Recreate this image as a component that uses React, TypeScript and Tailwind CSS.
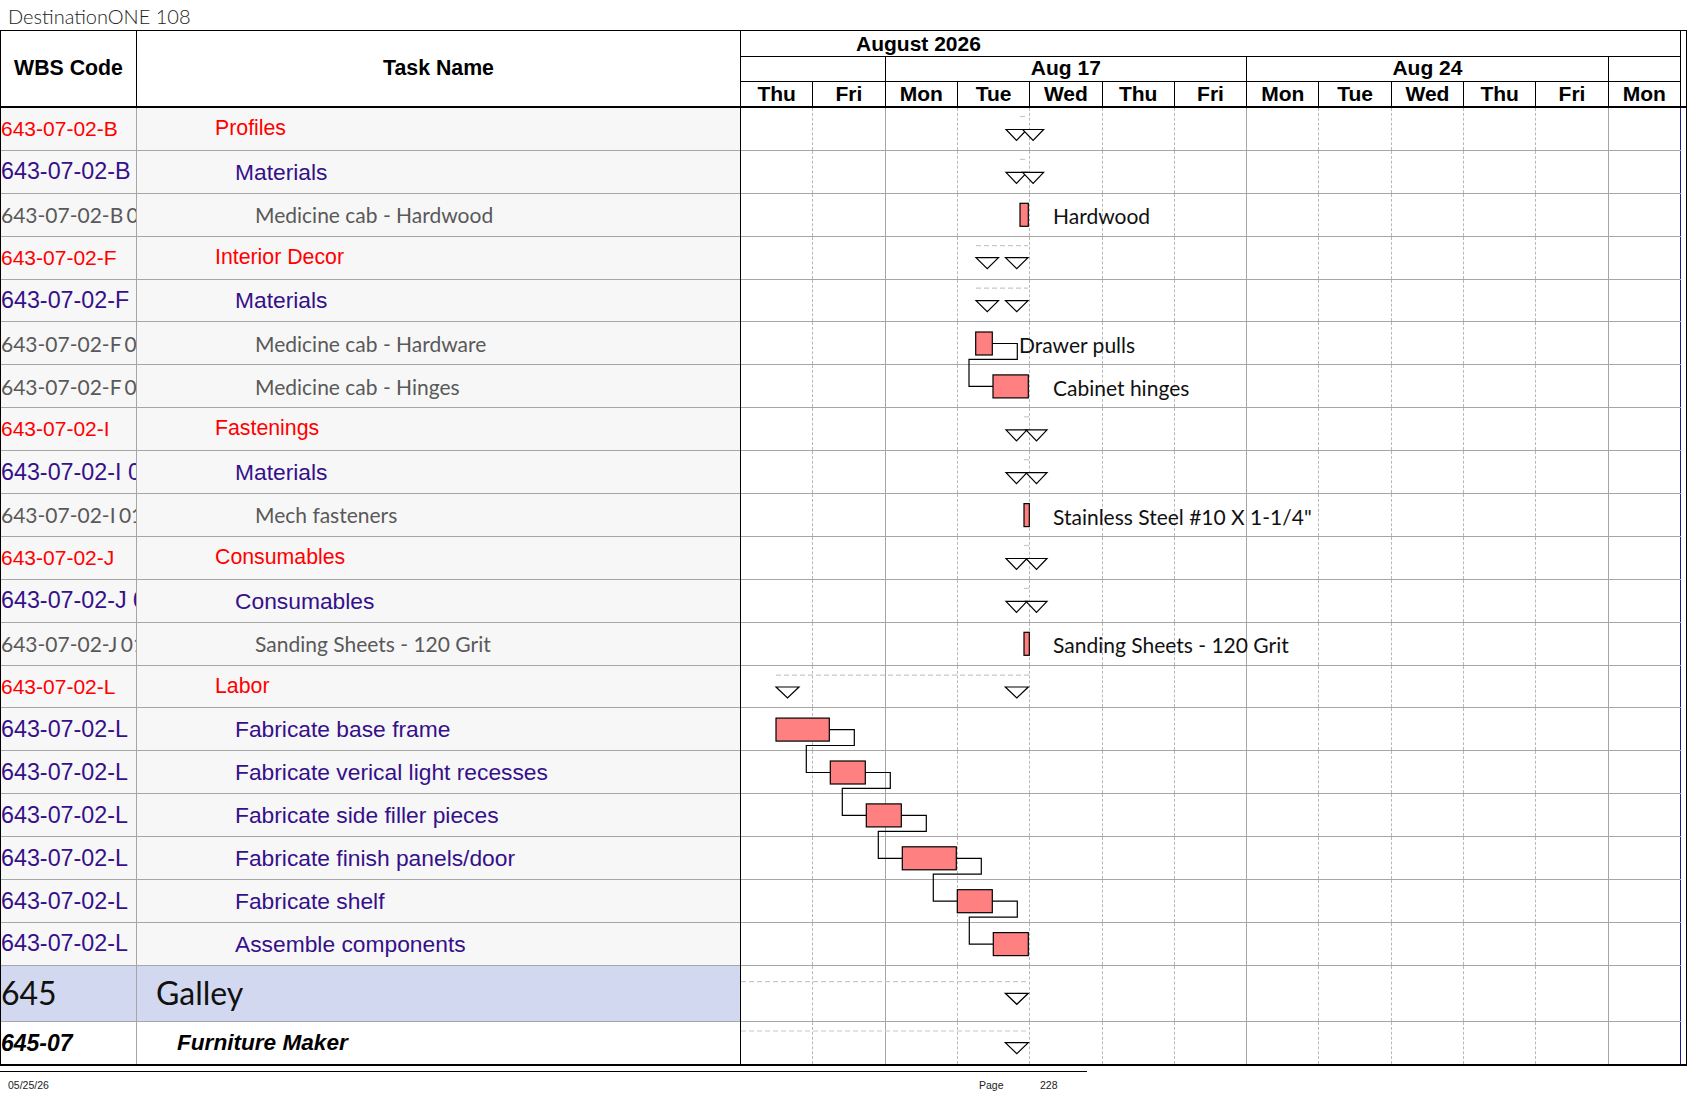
import React from "react";

type Kind = "sum" | "sub" | "task";
type Row = { wbs: string; name: string; kind: Kind };

const rows: Row[] = [
  { wbs: "643-07-02-B", name: "Profiles", kind: "sum" },
  { wbs: "643-07-02-B", name: "Materials", kind: "sub" },
  { wbs: "643-07-02-B 01", name: "Medicine cab - Hardwood", kind: "task" },
  { wbs: "643-07-02-F", name: "Interior Decor", kind: "sum" },
  { wbs: "643-07-02-F", name: "Materials", kind: "sub" },
  { wbs: "643-07-02-F 01", name: "Medicine cab - Hardware", kind: "task" },
  { wbs: "643-07-02-F 02", name: "Medicine cab - Hinges", kind: "task" },
  { wbs: "643-07-02-I", name: "Fastenings", kind: "sum" },
  { wbs: "643-07-02-I 01", name: "Materials", kind: "sub" },
  { wbs: "643-07-02-I 01 01", name: "Mech fasteners", kind: "task" },
  { wbs: "643-07-02-J", name: "Consumables", kind: "sum" },
  { wbs: "643-07-02-J 01", name: "Consumables", kind: "sub" },
  { wbs: "643-07-02-J 01 01", name: "Sanding Sheets - 120 Grit", kind: "task" },
  { wbs: "643-07-02-L", name: "Labor", kind: "sum" },
  { wbs: "643-07-02-L", name: "Fabricate base frame", kind: "sub" },
  { wbs: "643-07-02-L", name: "Fabricate verical light recesses", kind: "sub" },
  { wbs: "643-07-02-L", name: "Fabricate side filler pieces", kind: "sub" },
  { wbs: "643-07-02-L", name: "Fabricate finish panels/door", kind: "sub" },
  { wbs: "643-07-02-L", name: "Fabricate shelf", kind: "sub" },
  { wbs: "643-07-02-L", name: "Assemble components", kind: "sub" },
];

const wbsStyle: Record<Kind, string> = {
  sum: "font-['Liberation_Sans',Arial,sans-serif] text-[21px] text-[#ff0000]",
  sub: "font-['Liberation_Sans',Arial,sans-serif] text-[23.3px] text-[#35108a]",
  task: "font-['Lato',sans-serif] text-[21px] text-[#595959] [word-spacing:-2px]",
};

const nameStyle: Record<Kind, string> = {
  sum: "pl-[78px] font-['Liberation_Sans',Arial,sans-serif] text-[21.3px] text-[#ff0000]",
  sub: "pl-[98px] font-['Liberation_Sans',Arial,sans-serif] text-[22.8px] text-[#35108a]",
  task: "pl-[118px] font-['Lato',sans-serif] text-[21px] text-[#595959]",
};

const days = ["Thu", "Fri", "Mon", "Tue", "Wed", "Thu", "Fri", "Mon", "Tue", "Wed", "Thu", "Fri", "Mon"];

// page coordinates -> chart body coordinates
const X = (x: number) => x - 741;
const T = (i: number) => 42.9 * i;

const bars: [number, number, number][] = [
  [2, 1020, 1028.3],
  [5, 975.7, 992.3],
  [6, 993, 1028.3],
  [9, 1024, 1029.3],
  [12, 1024, 1029.3],
  [14, 776, 829.3],
  [15, 830.3, 865.3],
  [16, 866.3, 901.3],
  [17, 902.3, 956.3],
  [18, 957.3, 992.3],
  [19, 993.3, 1028.3],
];

const links: [number, number][] = [
  [5, 6],
  [14, 15],
  [15, 16],
  [16, 17],
  [17, 18],
  [18, 19],
];

const labels: [number, string, number][] = [
  [2, "Hardwood", 1053],
  [5, "Drawer pulls", 1019],
  [6, "Cabinet hinges", 1053],
  [9, 'Stainless Steel #10 X 1-1/4"', 1053],
  [12, "Sanding Sheets - 120 Grit", 1053],
];

type Tri = [number, number, number]; // top y, left x, width

const pair = (i: number, dy: number, a: number, b: number, w: number): Tri[] => [
  [T(i) + dy, a, w],
  [T(i) + dy, b, w],
];

const tris: Tri[] = [
  ...pair(0, 21.5, 1006, 1022.6, 21),
  ...pair(1, 21.5, 1006, 1022.6, 21),
  ...pair(3, 21, 976, 1005.5, 22.5),
  ...pair(4, 21, 976, 1005.5, 22.5),
  ...pair(7, 21.5, 1006, 1026, 21),
  ...pair(8, 21.5, 1006, 1026, 21),
  ...pair(10, 21.5, 1006, 1026, 21),
  ...pair(11, 21.5, 1006, 1026, 21),
  ...pair(13, 21.3, 776, 1005.3, 23),
  [885.3, 1005.3, 23],
  [934.7, 1005.3, 23],
];

// [y, x1, x2]
const dashes: [number, number, number][] = [
  [T(0) + 8.5, 1020, 1027],
  [T(1) + 8.5, 1020, 1027],
  [T(3) + 9, 976, 1028],
  [T(4) + 8.5, 976, 1028],
  [T(7) + 8.5, 1024, 1029],
  [T(8) + 8.5, 1024, 1029],
  [T(10) + 8.5, 1024, 1029],
  [T(11) + 8.5, 1024, 1029],
  [T(13) + 9.5, 776, 1029],
  [873.7, 741, 1029],
  [923, 741, 1029],
];

function GridCells() {
  return (
    <>
      {days.map((d, i) =>
        i === 12 ? (
          <div key={i} className="border-r border-[#1c1c8c]" />
        ) : i === 1 || i === 6 || i === 11 ? (
          <div key={i} className="border-r border-[#a6a6a6]" />
        ) : (
          <div key={i} className="border-r border-dashed border-[#b8b8b8]" />
        )
      )}
    </>
  );
}

function GanttDrawing() {
  return (
    <svg className="pointer-events-none absolute left-0 top-0" width={940} height={957} viewBox="0 0 940 957">
      {dashes.map(([y, a, b], i) => (
        <line key={i} x1={X(a)} x2={X(b)} y1={y} y2={y} stroke="#c8c8c8" strokeWidth={1.2} strokeDasharray="5 3" />
      ))}
      {links.map(([a, b]) => {
        const from = bars.find((r) => r[0] === a)!;
        const to = bars.find((r) => r[0] === b)!;
        const xr = X(from[2]);
        const xl = X(to[1]);
        const ca = T(a) + 21;
        const cb = T(b) + 21;
        const mid = T(b) - 6;
        return (
          <path
            key={a}
            d={`M${xr} ${ca} H${xr + 25} V${mid} H${xl - 24} V${cb} H${xl}`}
            fill="none"
            stroke="#000"
            strokeWidth={1.2}
          />
        );
      })}
      {bars.map(([i, a, b]) => (
        <rect key={i} x={X(a)} y={T(i) + 9.5} width={b - a} height={23} fill="#ff8080" stroke="#000" strokeWidth={1.2} />
      ))}
      {tris.map(([y, x, w], i) => (
        <polygon
          key={i}
          points={`${X(x)},${y} ${X(x) + w},${y} ${X(x) + w / 2},${y + 11}`}
          fill="#fff"
          stroke="#000"
          strokeWidth={1.2}
        />
      ))}
      {labels.map(([i, text, x]) => (
        <text
          key={i}
          x={X(x)}
          y={T(i) + 22}
          dominantBaseline="central"
          fontFamily="Lato, sans-serif"
          fontSize={21}
          fill="#111"
        >
          {text}
        </text>
      ))}
    </svg>
  );
}

export default function App() {
  return (
    <div className="h-[1097px] w-[1687px] overflow-hidden bg-white text-black">
      <div className="flex h-[30px] items-center pl-[8px] pt-[2px] font-['Lato',sans-serif] text-[20px] font-light text-[#222]">
        DestinationONE 108
      </div>

      <div className="flex border border-b-2 border-black">
        {/* table columns */}
        <div className="w-[740px] border-r border-black">
          <div className="flex h-[77px] border-b-2 border-black font-['Liberation_Sans',Arial,sans-serif] text-[21.3px] font-bold">
            <div className="flex w-[136px] items-center justify-center border-r border-black">WBS Code</div>
            <div className="flex flex-1 items-center justify-center">Task Name</div>
          </div>
          {rows.map((r, i) => (
            <div key={i} className="flex h-[42.9px] border-b border-[#a6a6a6] bg-[#f7f7f7]">
              <div className={`flex w-[136px] items-center overflow-hidden whitespace-nowrap border-r border-[#a6a6a6] ${wbsStyle[r.kind]}`}>
                {r.wbs}
              </div>
              <div className={`flex flex-1 items-center whitespace-nowrap ${nameStyle[r.kind]}`}>{r.name}</div>
            </div>
          ))}
          <div className="flex h-[55.7px] border-b border-[#a6a6a6] bg-[#d2d8ef] font-['Lato',sans-serif] text-[32px] text-[#111]">
            <div className="flex w-[136px] items-center border-r border-[#a6a6a6]">645</div>
            <div className="flex flex-1 items-center pl-[19px]">Galley</div>
          </div>
          <div className="flex h-[42.6px] bg-white font-['Liberation_Sans',Arial,sans-serif] font-bold italic">
            <div className="flex w-[136px] items-center border-r border-[#a6a6a6] text-[23px]">645-07</div>
            <div className="flex flex-1 items-center pl-[40px] text-[22.6px]">Furniture Maker</div>
          </div>
        </div>

        {/* timescale */}
        <div className="w-[940px]">
          <div className="h-[77px] border-b-2 border-black font-['Liberation_Sans',Arial,sans-serif] text-[21px] font-bold leading-none">
            <div className="flex h-[26px] items-center border-b border-r border-black pb-[1px] pl-[115px]">August 2026</div>
            <div className="grid h-[25px] grid-cols-[repeat(13,minmax(0,1fr))] border-b border-black">
              <div className="col-span-2 border-r border-black" />
              <div className="col-span-5 flex items-center justify-center border-r border-black pb-[3px]">Aug 17</div>
              <div className="col-span-5 flex items-center justify-center border-r border-black pb-[3px]">Aug 24</div>
              <div className="border-r border-black" />
            </div>
            <div className="grid h-[24px] grid-cols-[repeat(13,minmax(0,1fr))]">
              {days.map((d, i) => (
                <div key={i} className="flex items-center justify-center border-r border-black pb-[2px]">
                  {d}
                </div>
              ))}
            </div>
          </div>
          <div className="relative">
            {rows.map((_, i) => (
              <div key={i} className="grid h-[42.9px] grid-cols-[repeat(13,minmax(0,1fr))] border-b border-[#a6a6a6]">
                <GridCells />
              </div>
            ))}
            <div className="grid h-[55.7px] grid-cols-[repeat(13,minmax(0,1fr))] border-b border-[#a6a6a6]">
              <GridCells />
            </div>
            <div className="grid h-[42.6px] grid-cols-[repeat(13,minmax(0,1fr))]">
              <GridCells />
            </div>
            <GanttDrawing />
          </div>
        </div>

        <div className="w-[5px]">
          <div className="h-[77px] border-b-2 border-black" />
        </div>
      </div>

      <div className="mt-[5px] w-[1087px] border-t border-black font-['Liberation_Sans',Arial,sans-serif] text-[10.5px] text-[#222]">
        <div className="flex pl-[8px] pt-[6px]">
          <span className="w-[971px]">05/25/26</span>
          <span className="w-[61px]">Page</span>
          <span>228</span>
        </div>
      </div>
    </div>
  );
}
